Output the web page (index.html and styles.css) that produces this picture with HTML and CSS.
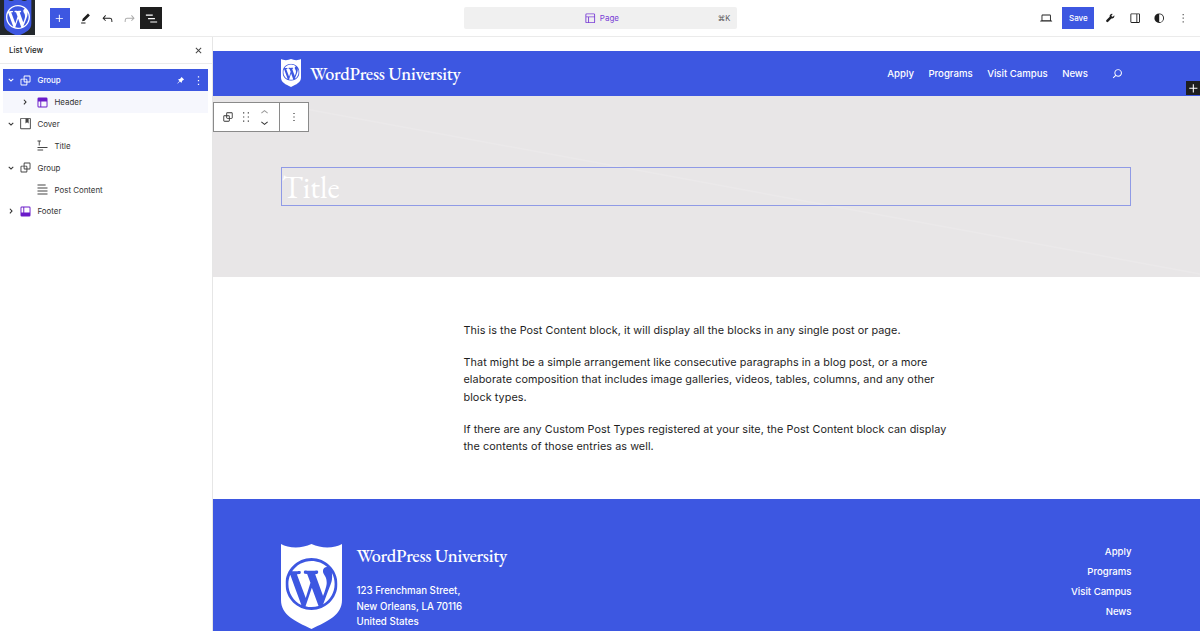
FILE: index.html
```html
<!DOCTYPE html>
<html lang="en">
<head>
<meta charset="utf-8">
<title>Page – Editor</title>
<link rel="stylesheet" href="styles.css">
</head>
<body>
<svg class="defs" aria-hidden="true">
  <symbol id="wp" viewBox="0 0 20 20"><path d="M20 10c0-5.51-4.49-10-10-10C4.48 0 0 4.49 0 10c0 5.52 4.48 10 10 10 5.51 0 10-4.48 10-10zM7.78 15.37L4.37 6.22c.55-.02 1.17-.08 1.17-.08.5-.06.44-1.13-.06-1.11 0 0-1.45.11-2.37.11-.18 0-.37 0-.58-.01C4.12 2.69 6.87 1.11 10 1.11c2.33 0 4.45.87 6.05 2.34-.68-.11-1.65.39-1.65 1.58 0 .74.45 1.36.9 2.1.35.61.55 1.36.55 2.46 0 1.49-1.4 5-1.4 5l-3.03-8.37c.54-.02.82-.17.82-.17.5-.05.44-1.25-.06-1.22 0 0-1.44.12-2.38.12-.87 0-2.33-.12-2.33-.12-.5-.03-.56 1.2-.06 1.22l.92.08 1.26 3.41zM17.41 10c.24-.64.74-1.87.43-4.25.7 1.29 1.05 2.71 1.05 4.25 0 3.29-1.73 6.24-4.4 7.78.97-2.59 1.94-5.2 2.92-7.78zM6.1 18.09C3.12 16.65 1.11 13.53 1.11 10c0-1.3.23-2.48.72-3.59C3.25 10.3 4.67 14.2 6.1 18.09zm4.03-6.63l2.58 6.98c-.86.29-1.76.45-2.71.45-.79 0-1.57-.11-2.29-.33.81-2.38 1.62-4.74 2.42-7.1z"/></symbol>
  <symbol id="shield" viewBox="0 0 61 85"><path d="M0 0C7 4 20 5 30.500 0C41 5 54 4 61 0V56C61 71 47 77 30.500 85C14 77 0 71 0 56Z"/></symbol>
  <symbol id="group" viewBox="0 0 24 24"><path d="M18 4h-7c-1.100 0-2 .9-2 2v3H6c-1.100 0-2 .9-2 2v7c0 1.100.9 2 2 2h7c1.100 0 2-.9 2-2v-3h3c1.100 0 2-.9 2-2V6c0-1.100-.9-2-2-2zm-4.500 14c0 .3-.2.5-.5.5H6c-.3 0-.5-.2-.5-.5v-7c0-.3.2-.5.5-.5h3V13c0 1.100.9 2 2 2h2.500v3zm0-4.500H11c-.3 0-.5-.2-.5-.5v-2.500H13c.3 0 .5.2.5.5v2.500zm5-.5c0 .3-.2.5-.5.5h-3V11c0-1.100-.9-2-2-2h-2.500V6c0-.3.2-.5.5-.5h7c.3 0 .5.2.5.5v7z"/></symbol>
  <symbol id="plus" viewBox="0 0 24 24"><path d="M11 12.500V17.500H12.500V12.500H17.500V11H12.500V6H11V11H6V12.500H11Z"/></symbol>
  <symbol id="more" viewBox="0 0 24 24"><path d="M13 19h-2v-2h2v2zm0-6h-2v-2h2v2zm0-6h-2V5h2v2z"/></symbol>
  <symbol id="down" viewBox="0 0 24 24"><path d="M17.500 11.600 12 16l-5.500-4.400.9-1.200L12 14l4.500-3.600 1 1.200z"/></symbol>
  <symbol id="chev-down" viewBox="0 0 24 24"><path d="M16.500 10.800 12 15l-4.500-4.200 1.200-1.400L12 12.500l3.300-3.100z"/></symbol>
  <symbol id="chev-right" viewBox="0 0 24 24"><path d="M10.800 7.500 9.400 8.700l3.100 3.300-3.100 3.300 1.400 1.200L15 12z"/></symbol>
</svg>

<div class="editor">
  <header class="topbar">
    <div class="site-icon">
      <svg class="site-shield" viewBox="0 0 35 35"><path d="M4 0H8Q11 2 14 0H21Q24 2 27 0H31V23C31 31 24 32 17.500 36C11 32 4 31 4 23Z"/></svg>
      <svg class="site-mark"><use href="#wp"/></svg>
    </div>
    <div class="tools">
      <button class="tool add"><svg><use href="#plus"/></svg></button>
      <button class="tool"><svg viewBox="0 0 24 24"><path d="m19 7-3-3-8.500 8.500-1 4 4-1L19 7Zm-7 11.500H5V20h7v-1.500Z"/></svg></button>
      <button class="tool"><svg viewBox="0 0 24 24"><path d="M18.300 11.700c-.6-.6-1.400-.9-2.300-.9H6.700l2.900-3.300-1.100-1-4.500 5L8.500 16l1-1-2.700-2.700H16c.5 0 .9.2 1.300.5 1 1 1 3.400 1 4.500v.3h1.500v-.2c0-1.500 0-4.300-1.500-5.700z"/></svg></button>
      <button class="tool disabled"><svg viewBox="0 0 24 24"><path d="M15.600 6.500l-1.100 1 2.900 3.300H8c-.9 0-1.700.3-2.300.9-1.400 1.500-1.400 4.200-1.400 5.600v.2h1.500v-.3c0-1.100 0-3.500 1-4.500.3-.3.7-.5 1.300-.5h9.200L14.500 15l1.100 1.100 4.600-4.600-4.600-5z"/></svg></button>
      <button class="tool pressed"><svg viewBox="0 0 24 24"><path d="M3 5.600h11v1.900H3zM6.500 11.100h11V13h-11zM21 16.600H10v1.900h11z"/></svg></button>
    </div>
    <div class="doc-bar">
      <div class="doc-title">
        <svg viewBox="0 0 24 24"><path d="M18 5.500H6a.5.5 0 00-.5.5v3h13V6a.5.5 0 00-.5-.5zm.5 5H10v8h8a.5.5 0 00.5-.5v-7.500zm-10 0h-3V18a.5.5 0 00.5.5h2.500v-8zM6 4h12a2 2 0 012 2v12a2 2 0 01-2 2H6a2 2 0 01-2-2V6a2 2 0 012-2z" fill-rule="evenodd"/></svg>
        <span>Page</span>
      </div>
      <span class="shortcut">⌘K</span>
    </div>
    <div class="settings">
      <svg viewBox="0 0 24 24"><path d="M20.500 16h-.7V8c0-1.100-.9-2-2-2H6.200c-1.100 0-2 .9-2 2v8h-.7c-.8 0-1.500.7-1.500 1.500h20c0-.8-.7-1.500-1.500-1.500zM5.700 8c0-.3.2-.5.5-.5h11.600c.3 0 .5.2.5.5v7.600H5.700V8z"/></svg>
      <button class="save">Save</button>
      <svg viewBox="0 0 24 24"><path d="M14.103 7.128l2.260-2.260a4 4 0 00-5.207 4.804L5.828 15a2 2 0 102.828 2.828l5.329-5.328a4 4 0 004.804-5.208l-2.261 2.260-1.912-.512-.513-1.912z"/></svg>
      <svg viewBox="0 0 24 24"><path d="M18 4H6c-1.100 0-2 .9-2 2v12c0 1.100.9 2 2 2h12c1.100 0 2-.9 2-2V6c0-1.100-.9-2-2-2zm-4 14.500H6c-.3 0-.5-.2-.5-.5V6c0-.3.2-.5.5-.5h8v13zm4.500-.5c0 .3-.2.5-.5.5h-2.500v-13H18c.3 0 .5.2.5.5v12z"/></svg>
      <svg viewBox="0 0 24 24"><path fill-rule="evenodd" d="M20 12a8 8 0 1 1-16 0 8 8 0 0 1 16 0Zm-1.500 0a6.500 6.500 0 0 1-6.500 6.500v-13a6.500 6.500 0 0 1 6.500 6.500Z"/></svg>
      <svg class="faint"><use href="#more"/></svg>
    </div>
  </header>

  <div class="workspace">
    <aside class="sidebar">
      <div class="panel-head">
        <span>List View</span>
        <svg viewBox="0 0 24 24"><path d="M12 13.060l3.712 3.713 1.061-1.060L13.061 12l3.712-3.712-1.060-1.060L12 10.938 8.288 7.227l-1.061 1.060L10.939 12l-3.712 3.712 1.060 1.061L12 13.061z"/></svg>
      </div>
      <ul class="tree">
        <li class="row selected">
          <svg class="chev"><use href="#chev-down"/></svg><svg class="icon"><use href="#group"/></svg><span>Group</span>
          <svg class="pin" viewBox="0 0 24 24"><path d="m21.500 9.100-6.600-6.600-4.200 5.600c-1.200-.1-2.400.1-3.600.7-.1 0-.1.1-.2.1-.5.3-.9.6-1.200.9l3.700 3.700-5.700 5.700v1.100h1.100l5.700-5.700 3.700 3.700c.4-.4.7-.8.9-1.200.1-.1.1-.2.2-.3.6-1.100.8-2.400.6-3.600l5.600-4.100z"/></svg>
          <svg class="dots"><use href="#more"/></svg>
        </li>
        <li class="row child tinted">
          <svg class="chev"><use href="#chev-right"/></svg><svg class="icon purple" viewBox="0 0 24 24"><path fill-rule="evenodd" d="M18.500 10.500H10v8h8a.5.5 0 00.5-.5v-7.500zm-10 0h-3V18a.5.5 0 00.5.5h2.500v-8zM6 4h12a2 2 0 012 2v12a2 2 0 01-2 2H6a2 2 0 01-2-2V6a2 2 0 012-2z"/></svg><span>Header</span>
        </li>
        <li class="row">
          <svg class="chev"><use href="#chev-down"/></svg><svg class="icon" viewBox="0 0 24 24"><path fill-rule="evenodd" d="M5 3h14a1.500 1.500 0 0 1 1.500 1.500v15A1.500 1.500 0 0 1 19 21H5a1.500 1.500 0 0 1-1.500-1.500v-15A1.500 1.500 0 0 1 5 3zm0 1.400v15.200h14V4.400z"/><path d="M12 4h5v8l-2.500-2.200L12 12z"/></svg><span>Cover</span>
        </li>
        <li class="row child">
          <svg class="chev"></svg><svg class="icon" viewBox="0 0 24 24"><path d="m4 5.500h2v6.500h1.500v-6.500h2v-1.500h-5.500zm16 10.500h-16v-1.500h16zm-7 4h-9v-1.500h9z"/></svg><span>Title</span>
        </li>
        <li class="row">
          <svg class="chev"><use href="#chev-down"/></svg><svg class="icon"><use href="#group"/></svg><span>Group</span>
        </li>
        <li class="row child">
          <svg class="chev"></svg><svg class="icon" viewBox="0 0 24 24"><path d="M4 4h13v1.400H4zM4 8.800h16v1.400H4zM4 13.700h16v1.400H4zM4 18.500h16v1.400H4z"/></svg><span>Post Content</span>
        </li>
        <li class="row">
          <svg class="chev"><use href="#chev-right"/></svg><svg class="icon purple" viewBox="0 0 24 24"><path fill-rule="evenodd" d="M18 5.500h-8v8h8.500V6a.5.5 0 00-.5-.5zm-9.500 8h-3V6a.5.5 0 01.5-.5h2.500v8zM6 4h12a2 2 0 012 2v12a2 2 0 01-2 2H6a2 2 0 01-2-2V6a2 2 0 012-2z"/></svg><span>Footer</span>
        </li>
      </ul>
    </aside>

    <main class="canvas">
      <div class="site-header">
        <div class="brand">
          <svg class="crest" viewBox="0 0 61 85"><use href="#shield" width="61" height="85"/><use class="crest-mark" href="#wp" x="4.500" y="14" width="52" height="52"/></svg>
          <span class="brand-name">WordPress University</span>
        </div>
        <nav class="site-nav">
          <a>Apply</a><a>Programs</a><a>Visit Campus</a><a>News</a>
          <svg viewBox="0 0 24 24"><path d="M13 5c-3.300 0-6 2.700-6 6 0 1.400.5 2.700 1.300 3.700l-3.800 3.800 1.100 1.100 3.800-3.800c1 .8 2.300 1.300 3.700 1.300 3.300 0 6-2.700 6-6S16.300 5 13 5zm0 10.500c-2.500 0-4.500-2-4.500-4.500s2-4.500 4.500-4.500 4.500 2 4.500 4.500-2 4.500-4.500 4.500z"/></svg>
        </nav>
        <button class="inserter"><svg><use href="#plus"/></svg></button>
      </div>
      <section class="cover">
        <svg class="cover-line" viewBox="0 0 988 182" preserveAspectRatio="none"><path d="M60 7L988 179"/></svg>
        <div class="block-toolbar">
          <div class="toolbar-main">
            <svg><use href="#group"/></svg>
            <svg viewBox="0 0 24 24"><path d="M7 6h2V4H7v2zm0 7h2v-2H7v2zm0 7h2v-2H7v2zm8-16v2h2V4h-2zm0 9h2v-2h-2v2zm0 7h2v-2h-2v2z"/></svg>
            <div class="movers">
              <svg class="up"><use href="#down"/></svg>
              <svg><use href="#down"/></svg>
            </div>
          </div>
          <div class="toolbar-more"><svg><use href="#more"/></svg></div>
        </div>
        <h1 class="page-title"><span>Title</span></h1>
      </section>
      <article class="post">
        <p>This is the Post Content block, it will display all the blocks in any single post or page.</p>
        <p>That might be a simple arrangement like consecutive paragraphs in a blog post, or a more<br>elaborate composition that includes image galleries, videos, tables, columns, and any other<br>block types.</p>
        <p>If there are any Custom Post Types registered at your site, the Post Content block can display<br>the contents of those entries as well.</p>
      </article>
      <footer class="site-footer">
        <svg class="footer-crest" viewBox="0 0 61 85"><use href="#shield" width="61" height="85"/><use class="crest-mark" href="#wp" x="4.500" y="14" width="52" height="52"/></svg>
        <div class="footer-info">
          <span class="brand-name">WordPress University</span>
          <address>123 Frenchman Street,<br>New Orleans, LA 70116<br>United States</address>
        </div>
        <nav class="footer-nav"><a>Apply</a><a>Programs</a><a>Visit Campus</a><a>News</a></nav>
      </footer>
    </main>
  </div>
</div>
</body>
</html>
```
FILE: styles.css
```css
* { box-sizing: border-box; }
body { margin: 0; font-family: Inter, "Liberation Sans", sans-serif; color: #1e1e1e; background: #fff; }
button { border: 0; padding: 0; background: none; font: inherit; color: inherit; display: flex; align-items: center; justify-content: center; }
svg { display: block; flex: none; fill: currentColor; }
.defs { width: 0; height: 0; position: absolute; }
.editor { height: 631px; display: flex; flex-direction: column; overflow: hidden; }

.topbar { height: 37px; flex: none; display: flex; align-items: flex-start; border-bottom: 1px solid #ebebeb; }
.site-icon { width: 35.400px; height: 35.400px; background: #23282d; display: grid; place-items: center; overflow: hidden; }
.site-icon > svg { grid-area: 1 / 1; }
.site-shield { width: 35.400px; height: 35.400px; fill: #3d57e1; }
.site-mark { width: 24px; height: 24px; fill: #fff; margin-top: -1px; }
.tools { display: flex; padding: 7px 0 0 14.600px; }
.tool { width: 22px; height: 22px; }
.tool svg { width: 15px; height: 15px; }
.add { width: 20px; height: 20px; background: #3d57e1; color: #fff; margin: 1px 4.400px 0 0; }
.disabled { color: #aaa; }
.pressed { background: #1e1e1e; color: #fff; }
.doc-bar { width: 273px; height: 22px; margin: 7px 0 0 302px; background: #f0f0f0; border-radius: 2px; font-size: 8px; display: grid; grid-template-columns: 1fr auto 1fr; align-items: center; }
.doc-title { grid-column: 2; display: flex; align-items: center; gap: 2.500px; color: #7a3ed6; }
.doc-title svg { width: 14.500px; height: 14.500px; }
.shortcut { justify-self: end; padding-right: 7px; font-size: 7.500px; color: #555; }
.settings { margin-left: auto; padding: 7px 9.500px 0 0; display: flex; align-items: center; gap: 9.900px; }
.settings svg { width: 14.400px; height: 14.400px; }
.settings .faint { color: #555; }
.save { width: 32px; height: 22px; background: #3d57e1; color: #fff; font-size: 8px; font-weight: 500; margin: 0 -1px; }

.workspace { flex: 1; display: flex; min-height: 0; }
.sidebar { width: 212.500px; flex: none; border-right: 1px solid #e6e6e6; font-size: 7.900px; }
.panel-head { height: 27px; border-bottom: 1px solid #ebebeb; padding: 0 6px 0 9px; display: flex; align-items: center; justify-content: space-between; font-weight: 500; }
.panel-head svg { width: 15px; height: 15px; color: #444; }
.tree { list-style: none; margin: 0; padding: 5.300px 4px 0 3px; }
.row { height: 21.860px; display: flex; align-items: center; color: #333; }
.row.child { padding-left: 14px; }
.row.child .icon { margin-left: 3px; }
.chev { width: 14px; height: 14px; margin-left: 1px; }
.icon { width: 15px; height: 15px; margin: 0 4.500px 0 0; color: #444; }
.row .icon.purple { color: #6a1bc9; }
.row.selected, .selected .icon { color: #fff; }
.selected { background: #3d57e1; font-weight: 500; }
.tinted { background: #f6f7fd; }
.pin { width: 9px; height: 9px; margin-left: auto; margin-right: 6px; }
.dots { width: 15px; height: 15px; margin-right: 2px; }

.canvas { flex: 1; min-width: 0; padding-top: 14px; display: flex; flex-direction: column; }
.site-header { height: 45px; flex: none; background: #3d57e1; color: #fff; padding: 0 69px 2px 68.500px; display: flex; align-items: center; justify-content: space-between; position: relative; }
.brand { display: flex; align-items: center; gap: 9px; }
.crest { width: 20px; height: 28px; }
.crest-mark { fill: #3d57e1; }
.brand-name { font-family: "EB Garamond", "Liberation Serif", serif; font-size: 18.300px; font-weight: 500; line-height: 22px; letter-spacing: -.3px; white-space: nowrap; }
.brand .brand-name { padding-top: 2px; }
.site-nav { display: flex; align-items: center; gap: 14.500px; font-size: 9.600px; font-weight: 500; padding-top: 1.500px; }
.site-nav svg { width: 15px; height: 15px; margin: 0 6px 0 7.500px; }
.inserter { position: absolute; right: 0; bottom: 1px; width: 14px; height: 14px; background: #1e1e1e; }
.inserter svg { width: 17px; height: 17px; }

.cover { height: 181px; flex: none; background: #e8e6e7; position: relative; padding: 71px 69px 0 68.500px; }
.cover-line { position: absolute; inset: 0; width: 100%; height: 100%; fill: none; stroke: #ebe9ea; stroke-width: 1.500; }
.block-toolbar { position: absolute; left: 0; top: 6px; width: 96.500px; height: 30px; border: 1px solid #8a8a8a; background: #fff; display: flex; }
.block-toolbar svg { width: 14px; height: 14px; color: #333; }
.toolbar-main { width: 66px; border-right: 1px solid #8a8a8a; padding-left: 7px; display: flex; align-items: center; gap: 4.300px; }
.movers { display: flex; flex-direction: column; justify-content: center; height: 28px; }
.movers svg { width: 15px; height: 15px; margin: -2.500px 0; }
.block-toolbar .up { transform: rotate(180deg); color: #999; }
.toolbar-more { flex: 1; display: grid; place-items: center; }
.page-title { position: relative; height: 39px; margin: 0; border: 1px solid #8f9ae6; color: #fff; font: 400 31px/38px "EB Garamond", "Liberation Serif", serif; padding-left: 0; }

.post { height: 222px; flex: none; padding: 44.500px 0 0 251px; font-size: 10.800px; line-height: 17.500px; letter-spacing: .07px; }
.post p { margin: 0 0 14.700px; white-space: nowrap; }
.site-footer { flex: 1; min-height: 0; background: #3d57e1; color: #fff; padding: 45px 68.500px 0 68.500px; display: flex; align-items: flex-start; font-size: 9.700px; }
.footer-crest { width: 61px; height: 85px; }
.footer-info { margin: .500px 0 0 14.500px; }
.footer-info .brand-name { display: block; }
address { font-style: normal; font-weight: 500; line-height: 15.600px; margin-top: 16.500px; }
.footer-nav { margin-left: auto; display: flex; flex-direction: column; align-items: flex-end; font-weight: 500; line-height: 20.300px; margin-top: -2.500px; font-size: 9.600px; }
```
